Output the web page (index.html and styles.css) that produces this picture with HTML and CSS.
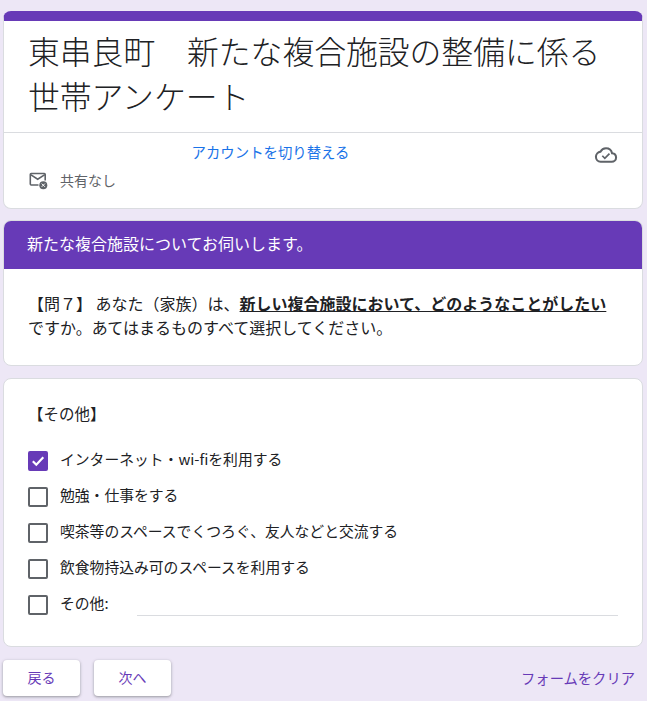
FILE: index.html
```html
<!DOCTYPE html>
<html lang="ja">
<head>
    <meta charset="UTF-8">
    <meta name="viewport" content="width=device-width, initial-scale=1.0">
    <title>世帯アンケート</title>
    <link rel="stylesheet" href="styles.css">
</head>
<body>
    <div class="card title-card">
        <h1 class="form-title">東串良町　新たな複合施設の整備に係る世帯アンケート</h1>
        <div class="account-row">
            <div class="account-info">
                <a class="switch-link">アカウントを切り替える</a>
                <div class="not-shared">
                    <svg class="mail-icon" width="20" height="20" viewBox="0 0 20 20">
                        <path d="M10.5 15H3.2a.9.9 0 0 1-.9-.9V4.400a.9.9 0 0 1 .9-.9h13.100a.9.9 0 0 1 .9.9v6.100" fill="none" stroke="#5f6368" stroke-width="1.6"/>
                        <path d="M2.600 4.600l7.100 4.600 7.100-4.600" fill="none" stroke="#5f6368" stroke-width="1.6"/>
                        <circle cx="15.3" cy="15.2" r="4" fill="#5f6368"/>
                        <path d="M13.700 13.600l3.200 3.200M16.900 13.600l-3.200 3.200" stroke="#fff" stroke-width="1"/>
                    </svg>
                    <span>共有なし</span>
                </div>
            </div>
            <svg class="cloud-icon" width="26" height="26" viewBox="0 0 24 24">
                <path d="M7 18.200h10.200c2.300 0 4.100-1.700 4.100-3.900 0-2-1.600-3.700-3.700-3.900C17 7.700 14.700 5.800 12 5.800c-2.200 0-4.100 1.200-5 3.100-2.400.3-4.300 2.300-4.300 4.700 0 2.500 1.900 4.600 4.300 4.600z" fill="none" stroke="#5f6368" stroke-width="1.9"/>
                <path d="M8.600 12.700l2.300 2.300 4.300-4.300" fill="none" stroke="#5f6368" stroke-width="1.6"/>
            </svg>
        </div>
    </div>

    <div class="card section-card">
        <div class="section-header">新たな複合施設についてお伺いします。</div>
        <p class="section-text">【問７】 あなた（家族）は、<b class="strong-under">新しい複合施設において、どのようなことがしたい</b>ですか。あてはまるものすべて選択してください。</p>
    </div>

    <div class="card question-card">
        <div class="question-title">【その他】</div>
        <div class="options">
            <div class="option">
                <span class="checkbox checked">
                    <svg width="14" height="14" viewBox="0 0 14 14"><path d="M1.800 7.200l3.500 3.500 7-7.400" fill="none" stroke="#fff" stroke-width="2.200"/></svg>
                </span>
                <span class="option-text">インターネット・wi-fiを利用する</span>
            </div>
            <div class="option"><span class="checkbox"></span><span class="option-text">勉強・仕事をする</span></div>
            <div class="option"><span class="checkbox"></span><span class="option-text">喫茶等のスペースでくつろぐ、友人などと交流する</span></div>
            <div class="option"><span class="checkbox"></span><span class="option-text">飲食物持込み可のスペースを利用する</span></div>
            <div class="option">
                <span class="checkbox"></span>
                <span class="option-text other-label">その他:</span>
                <span class="other-input"></span>
            </div>
        </div>
    </div>

    <div class="footer">
        <button class="nav-button">戻る</button>
        <button class="nav-button">次へ</button>
        <a class="clear-link">フォームをクリア</a>
    </div>
</body>
</html>
```

FILE: styles.css
```css
body {
    font-family: "Noto Sans CJK JP", "Noto Sans", sans-serif;
    margin: 0;
    padding: 11px 4px 0 3px;
    background-color: #ede7f6;
    color: #202124;
    height: 690px;
    overflow: hidden;
}

.card {
    background-color: white;
    border: 1px solid #dadce0;
    border-radius: 8px;
    margin-bottom: 12px;
    overflow: hidden;
}

.title-card {
    border-top: 10px solid #673ab7;
    height: 187px;
    margin-bottom: 11px;
}

.form-title {
    font-size: 31.8px;
    font-weight: 300;
    line-height: 45px;
    margin: 0;
    padding: 7px 24px 14px 24px;
    border-bottom: 1px solid #dadce0;
}

.account-row {
    display: flex;
    justify-content: space-between;
    padding: 9px 23px 0 24px;
}

.account-info {
    flex: 1;
}

.switch-link {
    display: block;
    color: #1a73e8;
    font-size: 14.4px;
    line-height: 20px;
    text-align: center;
    padding-right: 80px;
}

.not-shared {
    display: flex;
    align-items: center;
    gap: 12px;
    margin-top: 8px;
    color: #5f6368;
    font-size: 14px;
    line-height: 20px;
}

.section-header {
    background-color: #673ab7;
    color: white;
    font-size: 16px;
    line-height: 24px;
    padding: 10px 23px 14px;
}

.section-text {
    font-size: 16px;
    line-height: 24px;
    margin: 0;
    padding: 22px 24px 26px;
}

.strong-under {
    font-weight: 700;
    text-decoration: underline;
}

.question-card {
    height: 269px;
    margin-bottom: 13px;
    box-sizing: border-box;
}

.question-title {
    font-size: 15.5px;
    line-height: 20px;
    padding: 24px 24px 0;
}

.options {
    margin-top: 19px;
    padding: 0 24px;
}

.option {
    display: flex;
    align-items: center;
    height: 36px;
    font-size: 14.8px;
    gap: 12px;
}

.option-text {
    margin-bottom: 4px;
}

.checkbox {
    display: flex;
    align-items: center;
    justify-content: center;
    box-sizing: border-box;
    width: 20px;
    height: 20px;
    flex-shrink: 0;
    margin-top: 2px;
    border: 2px solid #5f6368;
    border-radius: 2px;
}

.checkbox.checked {
    background-color: #673ab7;
    border-color: #673ab7;
}

.other-label {
    width: 65px;
    flex-shrink: 0;
}

.other-input {
    flex: 1;
    align-self: flex-end;
    border-bottom: 1px solid #dadce0;
    margin-bottom: 6px;
}

.footer {
    display: flex;
    align-items: center;
    gap: 14px;
}

.nav-button {
    font-family: inherit;
    width: 77px;
    height: 36px;
    padding: 0 0 3px;
    background-color: white;
    color: #673ab7;
    border: none;
    border-radius: 4px;
    font-size: 14px;
    box-shadow: 0 1px 2px rgba(60,64,67,0.3), 0 1px 3px 1px rgba(60,64,67,0.15);
}

.clear-link {
    margin-left: auto;
    margin-right: 8px;
    margin-bottom: 2px;
    color: #673ab7;
    font-size: 14.3px;
}
```
